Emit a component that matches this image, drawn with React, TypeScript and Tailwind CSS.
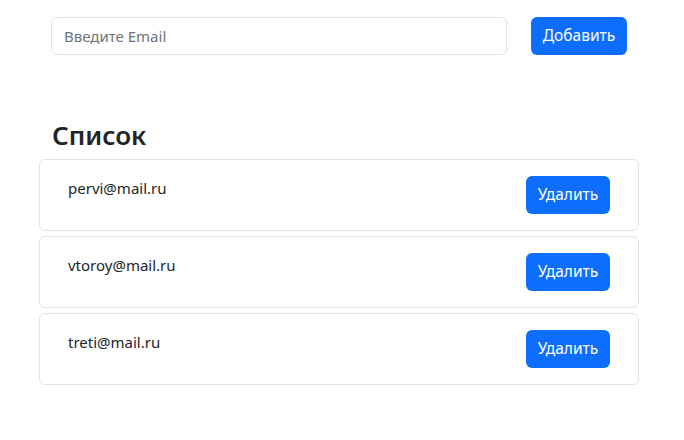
export default function App() {
  const items = ["pervi@mail.ru", "vtoroy@mail.ru", "treti@mail.ru"];
  return (
    <div className="w-[684px] h-[440px] bg-white text-[#212529] font-['Noto_Sans',sans-serif] text-[15px]">
      <div className="flex items-center pt-[17px] pl-[51px]">
        <input
          className="w-[456px] h-[38px] border border-[#dee2e6] rounded-[6px] px-[12px] text-[15px] placeholder:text-[#6c757d] outline-none"
          placeholder="Введите Email"
        />
        <button className="ml-[24px] h-[38px] w-[96px] bg-[#0d6efd] text-white rounded-[6px] text-[15.5px]">
          Добавить
        </button>
      </div>
      <h2 className="pl-[52px] mt-[64px] text-[26px] leading-[32px] font-semibold">Список</h2>
      <div className="ml-[39px] w-[600px] mt-[8px] flex flex-col gap-[5px]">
        {items.map((e) => (
          <div key={e} className="h-[72px] border border-[#dee2e6] rounded-[6px] flex items-start justify-between px-[28px] pt-[16px]">
            <div className="mt-[0px] leading-[24px]">{e}</div>
            <button className="h-[38px] w-[84px] bg-[#0d6efd] text-white rounded-[6px] text-[15.5px]">
              Удалить
            </button>
          </div>
        ))}
      </div>
    </div>
  );
}
